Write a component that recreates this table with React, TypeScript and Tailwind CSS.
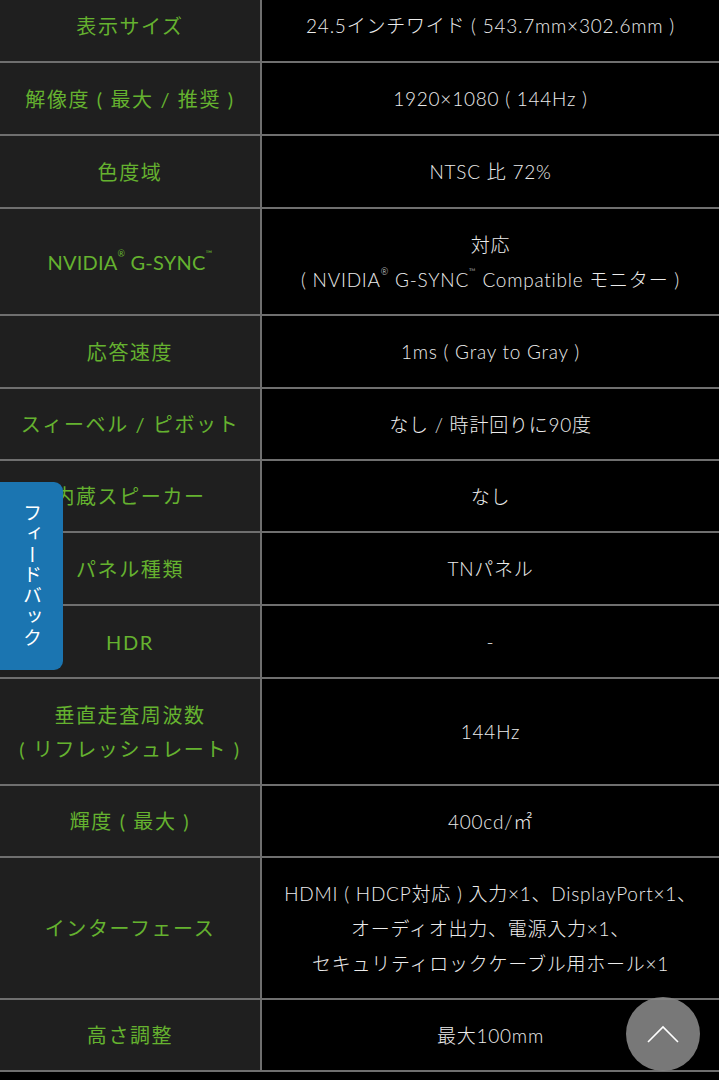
const specs: { label: string[]; value: string[]; h: string; tight?: boolean }[] = [
  { label: ["表示サイズ"], value: ["24.5インチワイド ( 543.7mm×302.6mm )"], h: "h-[73px]" },
  { label: ["解像度 ( 最大 / 推奨 )"], value: ["1920×1080 ( 144Hz )"], h: "h-[73px]" },
  { label: ["色度域"], value: ["NTSC 比 72%"], h: "h-[73px]" },
  {
    label: ["NVIDIA® G-SYNC™"],
    value: ["対応", "( NVIDIA® G-SYNC™ Compatible モニター )"],
    h: "h-[107px]",
    tight: true,
  },
  { label: ["応答速度"], value: ["1ms ( Gray to Gray )"], h: "h-[73px]" },
  { label: ["スィーベル / ピボット"], value: ["なし / 時計回りに90度"], h: "h-[72px]" },
  { label: ["内蔵スピーカー"], value: ["なし"], h: "h-[72px]" },
  { label: ["パネル種類"], value: ["TNパネル"], h: "h-[73px]" },
  { label: ["HDR"], value: ["-"], h: "h-[73px]" },
  { label: ["垂直走査周波数", "( リフレッシュレート )"], value: ["144Hz"], h: "h-[107px]" },
  { label: ["輝度 ( 最大 )"], value: ["400cd/㎡"], h: "h-[72px]" },
  {
    label: ["インターフェース"],
    value: [
      "HDMI ( HDCP対応 ) 入力×1、DisplayPort×1、",
      "オーディオ出力、電源入力×1、",
      "セキュリティロックケーブル用ホール×1",
    ],
    h: "h-[142px]",
  },
  { label: ["高さ調整"], value: ["最大100mm"], h: "h-[72px]" },
];

// small marks (® ™) sit raised like the original
function Marked({ text }: { text: string }) {
  const parts = text.split(/([®™])/);
  return (
    <>
      {parts.map((p, i) =>
        p === "®" || p === "™" ? (
          <sup key={i} className="text-[9px] align-super leading-none">
            {p}
          </sup>
        ) : (
          <span key={i}>{p}</span>
        )
      )}
    </>
  );
}

export default function App() {
  return (
    <div
      className="relative w-[719px] h-[1080px] overflow-hidden bg-black"
      style={{ fontFamily: 'Lato, "Noto Sans CJK JP", "Noto Sans", sans-serif' }}
    >
      <div className="-mt-[10px] flex flex-col">
        {specs.map((row) => (
          <div key={row.label.join()} className={`flex border-b-2 border-[#6f6f6f] ${row.h}`}>
            <div
              className={`w-[262px] shrink-0 bg-[#1f1f1f] border-r-2 border-[#6f6f6f] flex flex-col items-center justify-center text-center text-[20px] leading-[34px] text-[#65b22f] ${
                row.tight ? "tracking-[0.01em]" : "tracking-[0.08em]"
              }`}
            >
              {row.label.map((l) => (
                <div key={l}>
                  <Marked text={l} />
                </div>
              ))}
            </div>
            <div className="flex-1 bg-black flex flex-col items-center justify-center text-center text-[19px] leading-[35px] tracking-[0.04em] font-light text-[#ececec] whitespace-nowrap">
              {row.value.map((v) => (
                <div key={v}>
                  <Marked text={v} />
                </div>
              ))}
            </div>
          </div>
        ))}
      </div>

      {/* feedback tab */}
      <div className="absolute left-0 top-[482px] w-[63px] h-[188px] bg-[#1b75b1] rounded-r-[9px] flex items-center justify-center">
        <span
          className="text-white text-[19px] tracking-[0.1em] leading-none"
          style={{ writingMode: "vertical-rl" }}
        >
          フィードバック
        </span>
      </div>

      {/* back to top */}
      <button className="absolute left-[626px] top-[997px] w-[74px] h-[74px] rounded-full bg-[#858585]/90 flex items-center justify-center">
        <svg width="34" height="20" viewBox="0 0 34 20" fill="none">
          <path d="M2 18 L17 3 L32 18" stroke="white" strokeWidth="1.6" />
        </svg>
      </button>
    </div>
  );
}
